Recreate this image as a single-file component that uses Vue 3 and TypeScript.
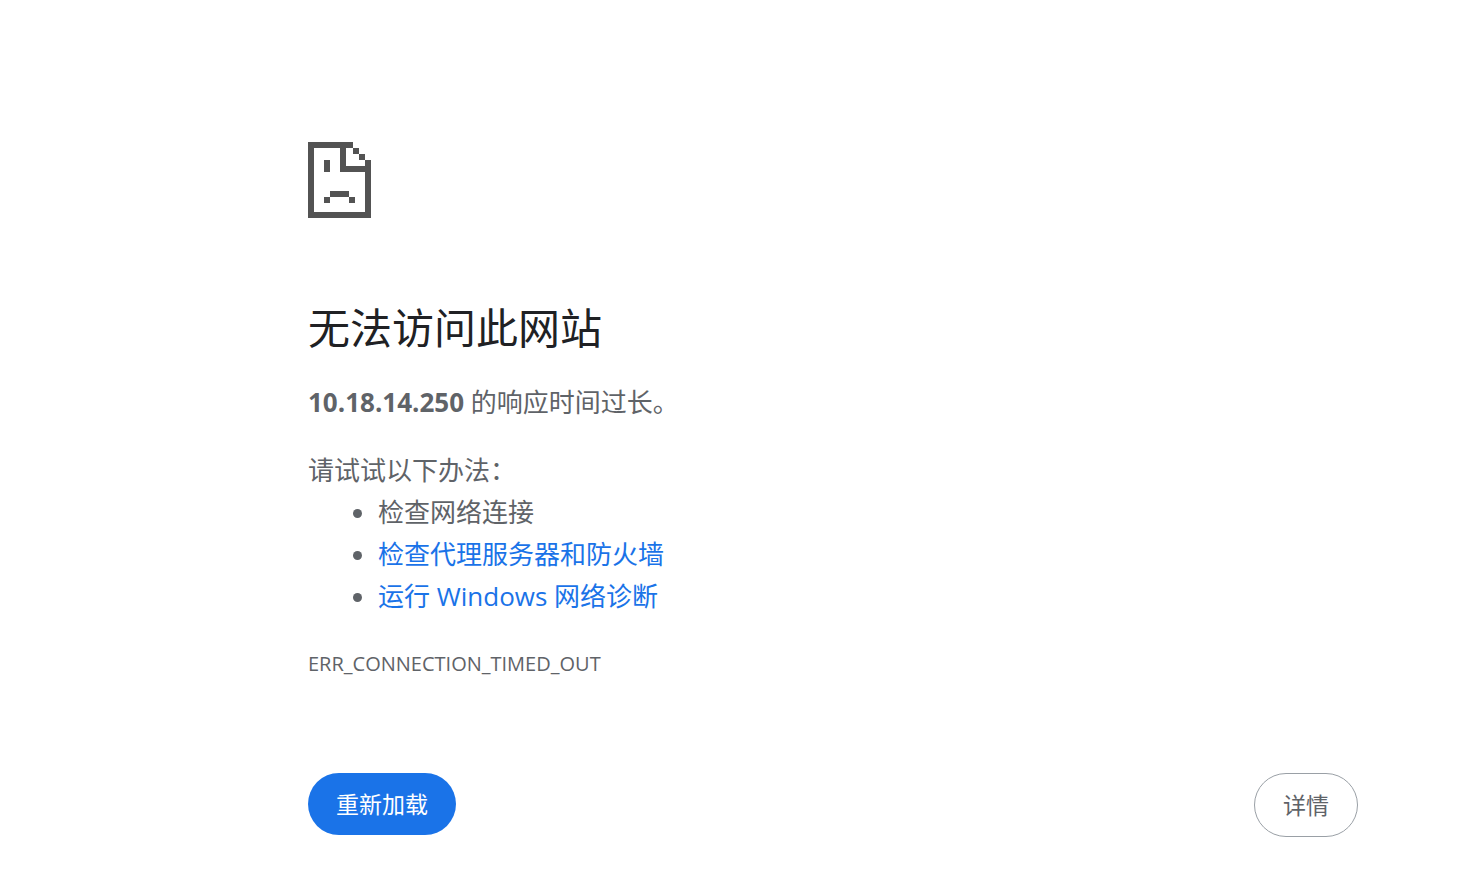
<script setup lang="ts">
interface Suggestion {
  text: string
  href?: string
}

const host = '10.18.14.250'
const errorCode = 'ERR_CONNECTION_TIMED_OUT'
const suggestions: Suggestion[] = [
  { text: '检查网络连接' },
  { text: '检查代理服务器和防火墙', href: '#proxy' },
  { text: '运行 Windows 网络诊断', href: '#diagnose' },
]

function reload(): void {
  window.location.reload()
}
</script>

<template>
  <main class="page">
    <svg class="icon" viewBox="0 0 63 76" aria-hidden="true" shape-rendering="crispEdges">
      <path
        fill="#535353"
        fill-rule="evenodd"
        d="M0 0H45V6H51V12H57V18H63V76H0ZM6 6V70H57V30H32V6ZM38 6V24H57V18H51V12H45V6ZM16 18H22V30H16ZM22 49H41V55H47V61H41V55H22V61H16V55H22Z"
      />
    </svg>
    <h1 class="title">无法访问此网站</h1>
    <p class="summary"><strong>{{ host }}</strong> 的响应时间过长。</p>
    <p class="hint">请试试以下办法：</p>
    <ul class="suggestions">
      <li v-for="item in suggestions" :key="item.text">
        <a v-if="item.href" :href="item.href">{{ item.text }}</a>
        <template v-else>{{ item.text }}</template>
      </li>
    </ul>
    <p class="code">{{ errorCode }}</p>
    <div class="actions">
      <button class="button primary" type="button" @click="reload">重新加载</button>
      <button class="button secondary" type="button">详情</button>
    </div>
  </main>
</template>

<style>
body {
  margin: 0;
  background: #fff;
}
</style>

<style scoped>
.page {
  padding: 142px 123px 40px 308px;
  color: #5f6368;
  font-family: "Segoe UI", "Open Sans", "Noto Sans CJK SC", sans-serif;
  font-size: 26px;
  line-height: 42px;
}

.icon {
  display: block;
  width: 63px;
  height: 76px;
}

.title {
  margin: 84px 0 27px;
  color: #202124;
  font-size: 42px;
  font-weight: 400;
  line-height: 52px;
}

.summary {
  margin: 0 0 26px;
}

.hint {
  margin: 0;
}

.suggestions {
  margin: 0;
  padding: 0 0 0 70px;
}

.suggestions a {
  color: #1a73e8;
  text-decoration: none;
}

.code {
  margin: 26px 0 88px;
  font-size: 20px;
}

.actions {
  display: flex;
  align-items: flex-start;
  justify-content: space-between;
}

.button {
  box-sizing: border-box;
  padding: 14px 28px;
  border: 0;
  border-radius: 32px;
  font-family: inherit;
  font-size: 23px;
  line-height: 34px;
  cursor: pointer;
}

.primary {
  background: #1a73e8;
  color: #fff;
}

.secondary {
  border: 1px solid #9aa0a6;
  background: #fff;
  color: #5f6368;
}
</style>
